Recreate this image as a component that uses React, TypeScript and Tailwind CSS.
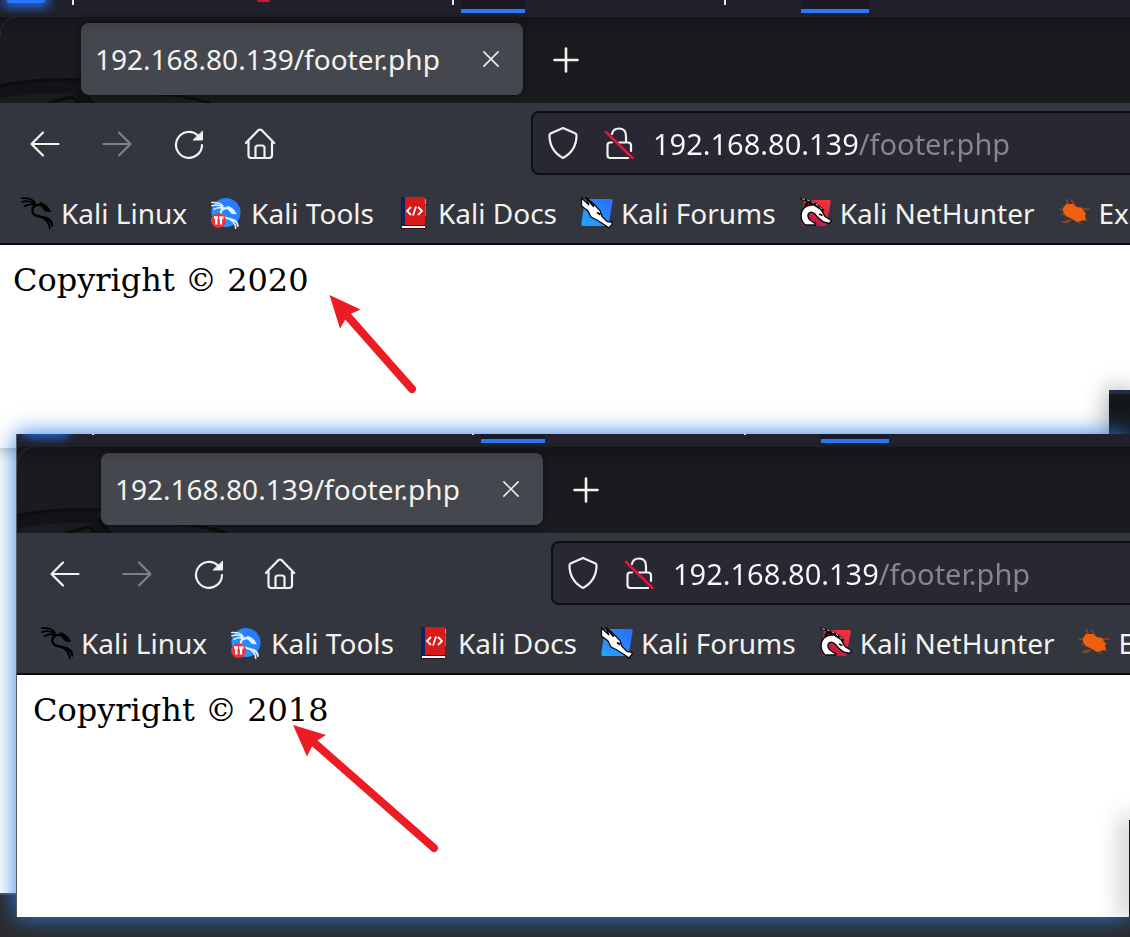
import type { ReactNode } from "react";

const HOST = "192.168.80.139";
const PATH = "/footer.php";

function Icon({ children, className = "size-8" }: { children: ReactNode; className?: string }) {
  return (
    <svg
      viewBox="0 0 32 32"
      className={className}
      fill="none"
      stroke="currentColor"
      strokeWidth="2"
      strokeLinecap="round"
      strokeLinejoin="round"
      aria-hidden="true"
    >
      {children}
    </svg>
  );
}

function DragonStrokes() {
  return (
    <>
      <path d="M.8 1.200C6 .8 11 1.500 14 5.500M1 5C6 3.200 10 4.200 13.500 6.500M3.500 9.200C7 7 11 6.800 15 8.500" strokeWidth="1.700" />
      <path d="M23 9C17 6.500 11.500 8.500 11.300 13.500C11.300 19 18 19.500 23 20.500C28 21.500 31 24.500 31.200 28.500" strokeWidth="2.300" />
      <path d="M21 20C26 22.500 28.500 26 28.700 31" strokeWidth="2" />
      <path d="M14 8C17 7 20 8 23 10L29 14L24.500 13.500L21 9.500M19.500 6C24 7.500 27 10 28.500 14" strokeWidth="1.800" />
    </>
  );
}

function KaliIcon() {
  return (
    <span className="block text-black">
      <Icon>
        <DragonStrokes />
      </Icon>
    </span>
  );
}

function ToolsIcon() {
  return (
    <svg viewBox="0 0 32 32" className="size-8" aria-hidden="true">
      <defs>
        <linearGradient id="tools" x1="0" y1="1" x2="1" y2="0">
          <stop offset="0" stopColor="#21a5ff" />
          <stop offset="1" stopColor="#2a6dff" />
        </linearGradient>
      </defs>
      <circle cx="15" cy="15.500" r="14.500" fill="url(#tools)" />
      <g transform="translate(0 4.500) scale(.86)" fill="none" stroke="#e4f1ff" strokeLinecap="round" strokeLinejoin="round">
        <DragonStrokes />
      </g>
      <circle cx="7.500" cy="23.500" r="7.500" fill="#f0313a" />
      <path d="M3 20.500h4M8 20.500h4.500M5.300 20.500v7M10 20.500v7" stroke="#fff" strokeWidth="2.300" />
    </svg>
  );
}

function DocsIcon() {
  return (
    <svg viewBox="0 0 32 32" className="size-8" aria-hidden="true">
      <path d="M3 0h24v32H3z" fill="#d91a1a" />
      <path d="M3 0h4v32H3z" fill="#0b2559" />
      <path d="M27 2h1v5h-1z" fill="#f59e0b" />
      <path d="M27 8h1v6h-1z" fill="#22a85a" />
      <path d="M27 14h1v5h-1z" fill="#2a7fff" />
      <path d="M3 28h24v1H3zM3 31h24v1H3z" fill="#3f0d18" />
      <path d="M4 29h23v2H4z" fill="#fff" />
      <path d="M13 10l-4 4 4 4M20 10l4 4-4 4M18 9.5l-3 9" fill="none" stroke="#fff" strokeWidth="1.800" />
    </svg>
  );
}

function ForumsIcon() {
  return (
    <svg viewBox="0 0 32 32" className="size-8" aria-hidden="true">
      <defs>
        <linearGradient id="forums" x1="0" y1="1" x2="1" y2="0">
          <stop offset="0" stopColor="#21a5ff" />
          <stop offset="1" stopColor="#2a6dff" />
        </linearGradient>
      </defs>
      <path d="M4 2h26q2 0 1.700 2l-4 23q-.4 2-2.400 2H2q-2 0-1.700-2z" fill="url(#forums)" />
      <path
        d="M0.500 1 8 8 5 .7l7 5.500 7 7.300 2 6 5 5 5 .8v2l-3 3.700-5-3.500-7-4.500-6-3-3-6-6.500-5z"
        fill="#fff"
        stroke="#0a0a0a"
        strokeWidth="1.300"
      />
      <path d="M5 .7l8 9M16 15.500l3.500 2.200" stroke="#0a0a0a" strokeWidth="2" />
    </svg>
  );
}

function NetHunterIcon() {
  return (
    <svg viewBox="0 0 32 32" className="size-8" aria-hidden="true">
      <defs>
        <linearGradient id="nethunter" x1="0" y1="1" x2="1" y2="0">
          <stop offset="0" stopColor="#a8104f" />
          <stop offset="1" stopColor="#ff3535" />
        </linearGradient>
      </defs>
      <path d="M4 3h25q2 0 1.700 2l-4 22q-.4 2-2.400 2H3q-2 0-1.700-2z" fill="url(#nethunter)" />
      <path
        d="M5 28C-1 22 0 12 7 9l6-1.500 8 5 4 7 6.500 4-2 3-6-1.500-5-4-4-4.500c-4-3-7-.5-6.500 3s3 5 7.500 7v1.500z"
        fill="#fff"
        stroke="#0a0a0a"
        strokeWidth="1.400"
      />
      <path d="M.5 1.500c7 1 15 4 23 12.500M5 9l3-4 5 3" fill="none" stroke="#0a0a0a" strokeWidth="2.600" />
      <path d="M2 1.800c7 1 13 3.500 20 10.500" fill="none" stroke="#fff" strokeWidth=".8" strokeDasharray="3 2" />
      <path d="M19 17l3.500 1.500" stroke="#0a0a0a" strokeWidth="1.500" />
    </svg>
  );
}

function ExploitIcon() {
  return (
    <svg viewBox="0 0 32 32" className="size-8" aria-hidden="true">
      <path
        d="M7 2l3 7M12 3l4 5M0 12l7 1M2 17l6 1M3 25l9-2M23 12l8 0M24 21l4 3M18 23l4 4M12 23l-6 3M20 10l6 3"
        fill="none"
        stroke="#8c4723"
        strokeWidth="1.500"
      />
      <path d="M4 11l3-4 7 0 4 3 5 1.500 2 3 2 2-1 2.500 1 4-4 .5-5 1.500-5-3-6-3-3-4z" fill="#ef6110" />
    </svg>
  );
}

const bookmarks: { label: string; icon: ReactNode }[] = [
  { label: "Kali Linux", icon: <KaliIcon /> },
  { label: "Kali Tools", icon: <ToolsIcon /> },
  { label: "Kali Docs", icon: <DocsIcon /> },
  { label: "Kali Forums", icon: <ForumsIcon /> },
  { label: "Kali NetHunter", icon: <NetHunterIcon /> },
  { label: "Exploit-DB", icon: <ExploitIcon /> },
];

function DesktopPanel({ inset }: { inset: string }) {
  return (
    <div className={`border-b-4 border-[#1f2023] bg-[#20212d] ${inset}`}>
      <div className="flex h-[13px] items-start">
        <div className="ml-[7px] h-[3px] w-[38px] shrink-0 rounded-b bg-[#2777ff] shadow-[0_0_10px_5px_#2361d0]" />
        <div className="ml-[27px] h-[5px] w-[2px] shrink-0 bg-[#e8e8ea]" />
        <div className="ml-[183px] h-[2px] w-[13px] shrink-0 rounded-b-full bg-[#d41920]" />
        <div className="ml-[182px] h-[5px] w-[2px] shrink-0 bg-[#e8e8ea]" />
        <div className="ml-[7px] h-[13px] w-16 shrink-0 border-b-4 border-[#2777ff] bg-[#191a24]" />
        <div className="ml-[199px] h-[5px] w-[2px] shrink-0 bg-[#e8e8ea]" />
        <div className="ml-[75px] h-[13px] w-[68px] shrink-0 border-b-4 border-[#2777ff] bg-[#191a24]" />
      </div>
    </div>
  );
}

function TabStrip({ inset }: { inset: string }) {
  return (
    <div className={`relative bg-[#1a1b1f] bg-linear-to-b from-[#141518] to-[#1a1b1f] to-25% ${inset}`}>
      <svg viewBox="0 0 240 86" className="absolute bottom-0 left-0 h-[86px] w-60" fill="none" aria-hidden="true">
        <path d="M0 20Q0 2 16 0" stroke="#2b2c30" />
        <path d="M0 69Q34 61 81 62v8L96 86H80L73 76Q34 75 0 81z" fill="#121316" />
        <path d="M0 69Q34 61 90 63" stroke="#0c0d0f" strokeWidth="3" />
        <path d="M48 86l24-6 7 6M82 72l10 14M150 76q35 2 60 10" stroke="#0c0d0f" strokeWidth="3" />
      </svg>
      <div className="relative flex h-[86px] items-center pb-2 pt-[6px] pl-[81px]">
        <div className="flex h-[72px] w-[442px] shrink-0 items-center justify-between rounded-lg bg-linear-to-b from-[#404144] to-[#44474e] to-20% pr-5 pl-[14px] shadow-[0_0_6px_#0d0e10]">
          <span className="text-[28px] leading-9 whitespace-nowrap text-[#f2f2ef]">
            {HOST + PATH}
          </span>
          <button type="button" aria-label="Close tab" className="text-[#f2f2ef]">
            <Icon className="size-6">
              <path d="M6.500 6.500l19 19M25.500 6.500l-19 19" />
            </Icon>
          </button>
        </div>
        <button type="button" aria-label="New tab" className="ml-[27px] text-[#f2f2ef]">
          <Icon>
            <path d="M16 5.500v23M4.500 17h23" strokeWidth="2.600" />
          </Icon>
        </button>
      </div>
    </div>
  );
}

function Toolbar({ inset }: { inset: string }) {
  return (
    <div className={`border-b-2 border-[#0b0c0f] bg-[#33363e] ${inset}`}>
      <div className="flex items-center pt-2 pl-[29px] text-[#f2f2ef]">
        <div className="flex shrink-0 items-center gap-10">
          <button type="button" aria-label="Back">
            <Icon>
              <path d="M29.500 17H2.500M14 5.500L2.500 17L14 28.500" strokeWidth="2.200" />
            </Icon>
          </button>
          <button type="button" aria-label="Forward" disabled className="text-[#7e7f83]">
            <Icon>
              <path d="M2.500 17H29.500M18 5.500L29.500 17L18 28.500" strokeWidth="2.200" />
            </Icon>
          </button>
          <button type="button" aria-label="Reload">
            <Icon>
              <path d="M29 18A13 13 0 1 1 25 8.500" strokeWidth="2.200" />
              <path d="M29.500 4.500V13H20.500z" fill="currentColor" strokeWidth="1" />
            </Icon>
          </button>
          <button type="button" aria-label="Home">
            <Icon>
              <path
                d="M.8 16L13.500 3Q15 2 16.500 3L29.200 16M3.500 13.500V28Q3.500 31 6.500 31H10.500V21Q10.500 18.500 13 18.500H17Q19.500 18.500 19.500 21V31H24Q27 31 27 28V13.500M10.500 31H19.500"
                strokeWidth="2.200"
              />
            </Icon>
          </button>
        </div>
        <div className="-mr-3 ml-[254px] flex h-16 flex-1 items-center rounded-lg border-2 border-[#0e0f12] bg-[#272833] pl-[14px]">
          <Icon className="size-8 shrink-0">
            <path
              d="M16 1L28.500 6.500Q29.500 7 29.500 8.500C29.500 18 25 26 16 31C7 26 2.500 18 2.500 8.500Q2.500 7 3.500 6.500Z"
              strokeWidth="2.200"
            />
          </Icon>
          <Icon className="ml-6 size-8 shrink-0">
            <path
              d="M9 7Q10 1.500 16 1.500Q23 1.500 23 9V15.500M16 15.500H25Q28 15.500 28 18.500V24M9 15.500H7Q4.500 15.500 4.500 18.500V28Q4.500 31 7.500 31H25"
              strokeWidth="2.200"
            />
            <path d="M3 5L29.500 31" stroke="#e6133f" strokeWidth="2.600" />
          </Icon>
          <input
            type="text"
            aria-label="Address"
            defaultValue={HOST + PATH}
            className="ml-[18px] w-0 min-w-0 flex-1 bg-linear-to-r from-[#f9f9fa] from-[206px] to-[#85868f] to-[206px] bg-clip-text pt-[2px] text-[29px] leading-10 text-transparent caret-white outline-none"
          />
        </div>
      </div>
      <nav aria-label="Bookmarks" className="flex h-[68px] items-center gap-6 overflow-hidden pt-2 pl-[21px]">
        {bookmarks.map((b) => (
          <a key={b.label} href="#" className="flex shrink-0 items-center gap-2 text-[28px] leading-9 whitespace-nowrap text-[#f2f2ef]">
            {b.icon}
            <span>{b.label}</span>
          </a>
        ))}
      </nav>
    </div>
  );
}

function Browser({ year, inset = "" }: { year: number; inset?: string }) {
  return (
    <>
      <DesktopPanel inset={inset} />
      <TabStrip inset={inset} />
      <Toolbar inset={inset} />
      <p className={`pt-[15px] font-['DejaVu_Serif',serif] text-[32px] leading-10 text-black ${inset}`}>
        <span className="ml-[13px]">Copyright © {year}</span>
      </p>
    </>
  );
}

export default function App() {
  return (
    <div className="min-h-screen overflow-hidden bg-[#2b2b2b] font-['Noto_Sans',sans-serif]">
      <div className="border-b-2 border-[#4c5158] bg-white">
        <section className="relative h-[448px] overflow-hidden bg-white shadow-[0_0_16px_#00000080]">
          <Browser year={2020} />
          <div className="absolute right-0 bottom-0 h-[58px] w-[21px] border-t-4 border-[#1f2d49] bg-[#15171b] shadow-[0_0_24px_#00000070]" />
          <svg viewBox="0 0 100 110" className="absolute top-[290px] left-80 h-[110px] w-[100px]" aria-hidden="true">
            <path d="M24 22L92 99" stroke="#ed1c24" strokeWidth="8" strokeLinecap="round" />
            <path d="M9.500 5L40.500 19.500L28 25L20 38.500Z" fill="#ed1c24" />
          </svg>
        </section>
        <section className="relative -mt-[14px] -mb-6 ml-4 shadow-[0_0_22px_#2a7de1]">
          <div className="relative h-[483px] overflow-hidden border-l border-[#55585f] bg-white">
            <div className="-mt-1">
              <Browser year={2018} inset="pl-[3px]" />
            </div>
            <div className="absolute right-0 bottom-0 h-[97px] w-px bg-[#15171b] shadow-[0_0_24px_4px_#00000070]" />
            <svg viewBox="0 0 160 140" className="absolute top-[286px] left-[268px] h-[140px] w-40" aria-hidden="true">
              <path d="M26 20L149 128" stroke="#ed1c24" strokeWidth="8" strokeLinecap="round" />
              <path d="M8 5L41 15L29 22.500L22 36.500Z" fill="#ed1c24" />
            </svg>
          </div>
        </section>
      </div>
    </div>
  );
}
